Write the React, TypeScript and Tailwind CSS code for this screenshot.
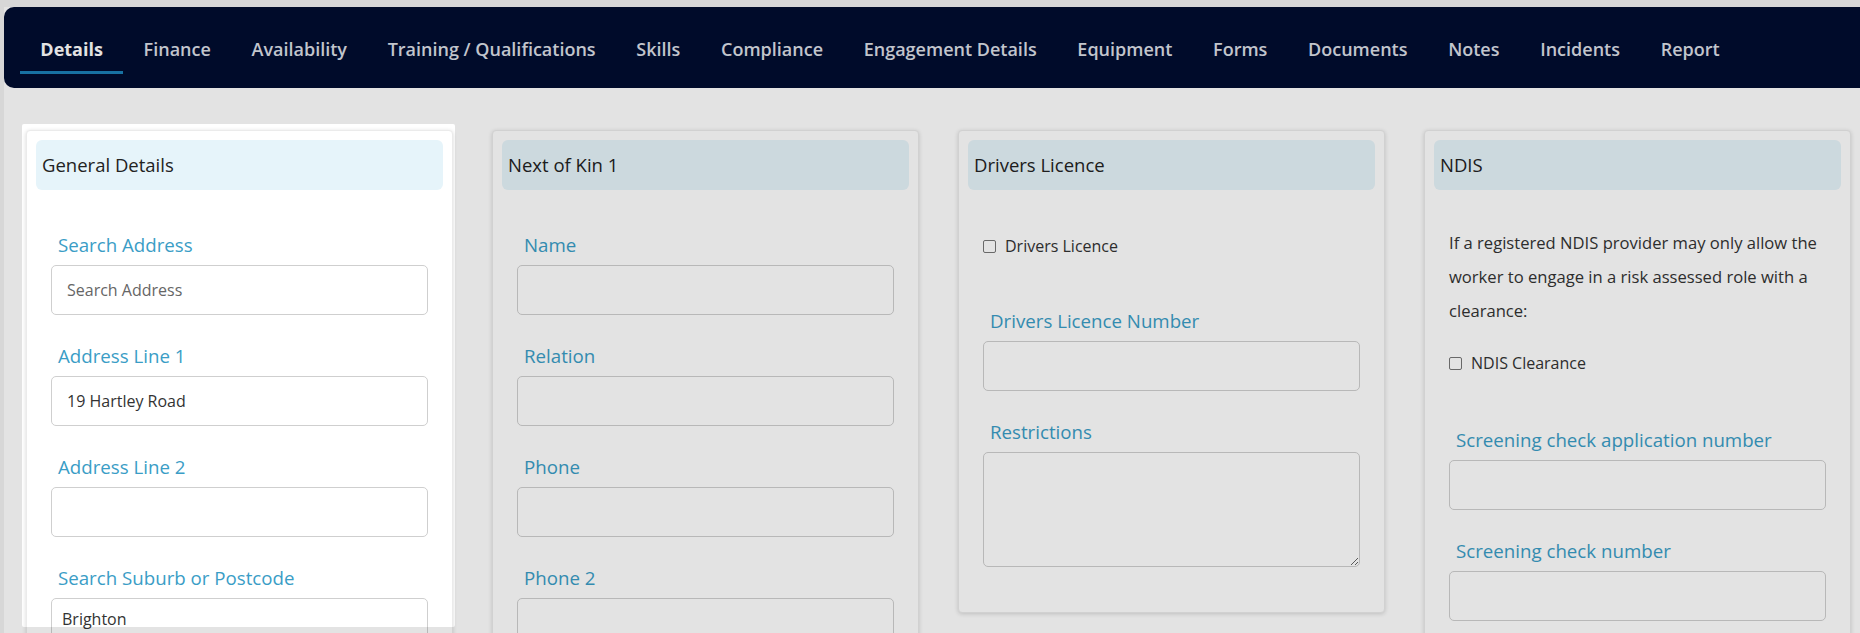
import React from "react";

const tabs = [
  "Details",
  "Finance",
  "Availability",
  "Training / Qualifications",
  "Skills",
  "Compliance",
  "Engagement Details",
  "Equipment",
  "Forms",
  "Documents",
  "Notes",
  "Incidents",
  "Report",
];

function Card({ title, children }: { title: string; children: React.ReactNode }) {
  return (
    <div className="rounded-[4px] border border-[#ebebeb] bg-white p-[9px] shadow-[0_1px_4px_rgba(0,0,0,0.16)]">
      <div className="flex h-[50px] items-center rounded-[6px] bg-[#e6f4fa] px-[6px] text-[18.5px] text-[#222]">
        {title}
      </div>
      {children}
    </div>
  );
}

function Field({
  label,
  value,
  placeholder,
  valueClass = "px-[15px]",
}: {
  label: string;
  value?: string;
  placeholder?: string;
  valueClass?: string;
}) {
  return (
    <div className="mb-[29px]">
      <div className="mb-[8px] pl-[7px] text-[18.7px] leading-[24px] text-[#3a9dc6]">{label}</div>
      <input
        readOnly
        value={value ?? ""}
        placeholder={placeholder}
        className={`block h-[50px] w-full rounded-[5px] border border-[#cfcfcf] bg-white ${valueClass} text-[16px] text-[#333] outline-none placeholder:text-[#666]`}
      />
    </div>
  );
}

function Check({ label }: { label: string }) {
  return (
    <div className="flex h-[24px] items-center text-[16px] text-[#333]">
      <span className="mr-[9px] inline-block h-[13px] w-[13px] rounded-[2px] border border-[#767676] bg-white" />
      {label}
    </div>
  );
}

export default function App() {
  return (
    <div className="relative h-[633px] w-[1860px] overflow-hidden bg-[#f2f2f2] pl-[4px] pt-[7px] font-['Segoe_UI','Open_Sans',sans-serif]">
      <div className="h-[700px] bg-white">
        <nav className="flex h-[81px] items-stretch rounded-l-[10px] bg-[#010d30] pl-[16px]">
          {tabs.map((t, i) => (
            <div
              key={t}
              className={`relative flex items-center px-[20.35px] pt-[3px] text-[18px] ${
                i === 0 ? "font-bold text-white" : "font-semibold text-[#dadee5]"
              }`}
            >
              {t}
              {i === 0 && <span className="absolute bottom-[14px] left-0 right-0 h-[3px] bg-[#1b80b6]" />}
            </div>
          ))}
        </nav>

        <div className="grid grid-cols-4 items-start gap-[39px] pl-[22px] pr-[9px] pt-[42px]">
          <Card title="General Details">
            <div className="px-[15px] pt-[43px]">
              <Field label="Search Address" placeholder="Search Address" />
              <Field label="Address Line 1" value="19 Hartley Road" />
              <Field label="Address Line 2" />
              <Field label="Search Suburb or Postcode" value="Brighton" valueClass="px-[10px] pb-[8px]" />
              <Field label="State" />
            </div>
          </Card>

          <Card title="Next of Kin 1">
            <div className="px-[15px] pt-[43px]">
              <Field label="Name" />
              <Field label="Relation" />
              <Field label="Phone" />
              <Field label="Phone 2" />
            </div>
          </Card>

          <Card title="Drivers Licence">
            <div className="px-[15px] pb-[36px] pt-[44px]">
              <Check label="Drivers Licence" />
              <div className="mt-[51px]">
                <Field label="Drivers Licence Number" />
              </div>
              <div className="mb-[8px] pl-[7px] text-[18.7px] leading-[24px] text-[#3a9dc6]">Restrictions</div>
              <textarea
                readOnly
                className="block h-[115px] w-full rounded-[5px] border border-[#cfcfcf] bg-white outline-none"
              />
            </div>
          </Card>

          <Card title="NDIS">
            <div className="px-[15px] pt-[36px]">
              <p className="text-[16.6px] leading-[34px] text-[#333]">
                If a registered NDIS provider may only allow the worker to engage in a risk assessed role with a
                clearance:
              </p>
              <div className="mt-[23px]">
                <Check label="NDIS Clearance" />
              </div>
              <div className="mt-[53px]">
                <Field label="Screening check application number" />
                <Field label="Screening check number" />
              </div>
            </div>
          </Card>
        </div>
      </div>

      <div className="pointer-events-none absolute left-[22px] top-[124px] h-[503px] w-[433px] rounded-[2px] shadow-[0_0_0_4000px_rgba(0,0,0,0.11)]" />
    </div>
  );
}
